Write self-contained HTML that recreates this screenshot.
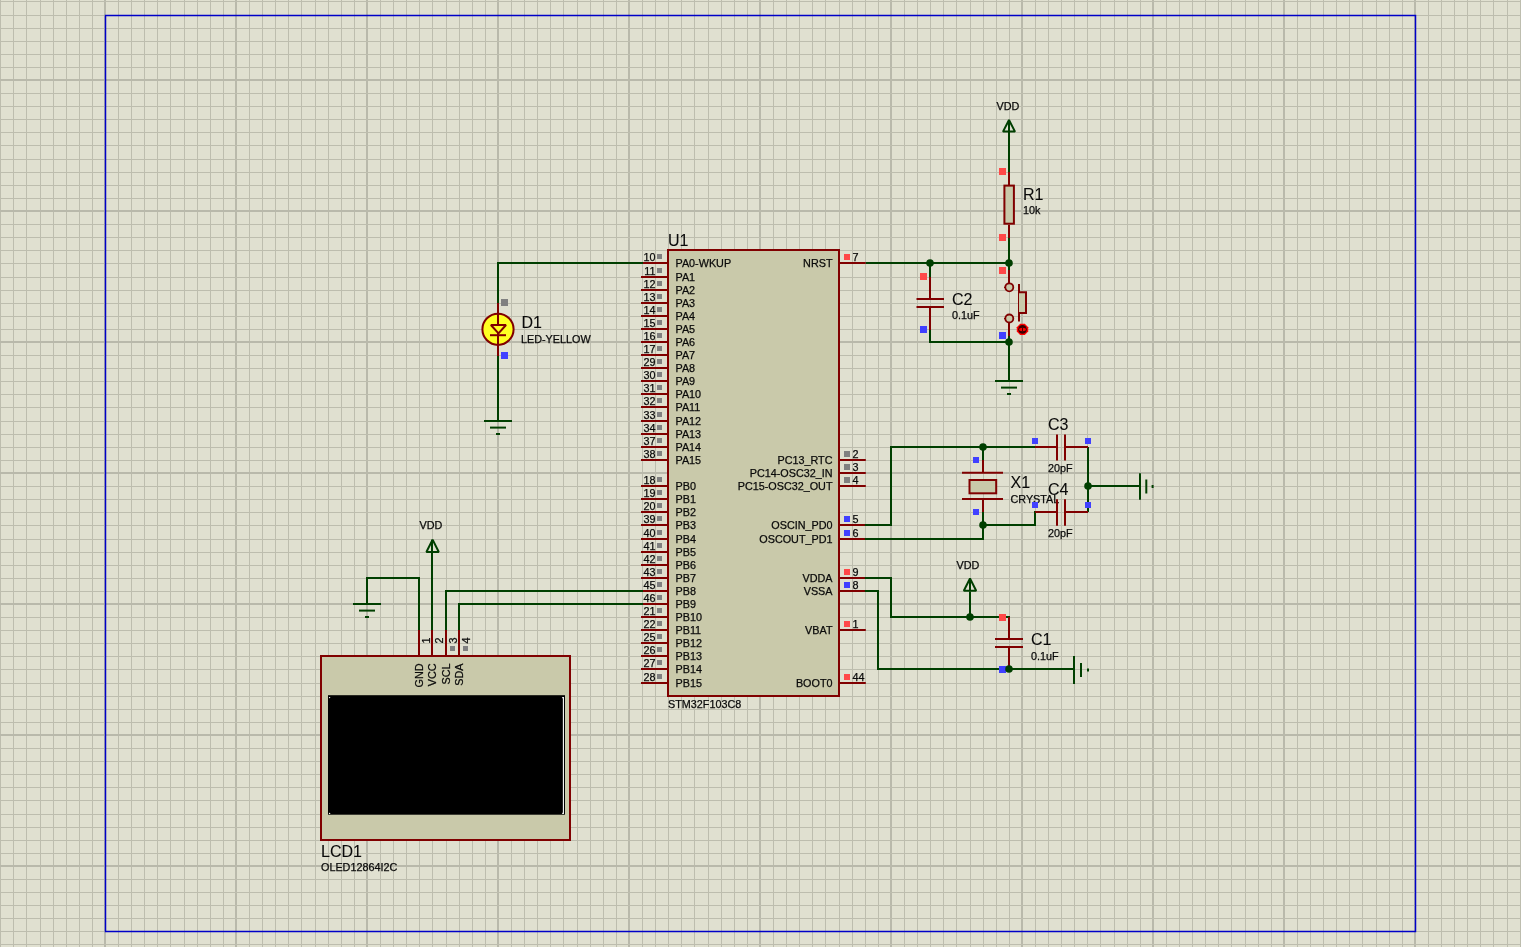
<!DOCTYPE html>
<html><head><meta charset="utf-8"><title>Proteus schematic</title>
<style>
html,body{margin:0;padding:0;background:#e0e0d0;}
body{width:1521px;height:947px;overflow:hidden;}
svg{display:block;will-change:transform;}
text{font-family:"Liberation Sans", sans-serif;fill:#0a0a0a;stroke:#0a0a0a;stroke-width:0.25px;}
text.L{stroke-width:0.08px;}
</style></head>
<body>
<svg width="1521" height="947" viewBox="0 0 1521 947">
<rect x="0" y="0" width="1521" height="947" fill="#e0e0d0"/>
<line x1="0.5" y1="0" x2="0.5" y2="947" stroke="#bdbdae" stroke-width="1"/>
<line x1="13.5" y1="0" x2="13.5" y2="947" stroke="#bdbdae" stroke-width="1"/>
<line x1="26.5" y1="0" x2="26.5" y2="947" stroke="#bdbdae" stroke-width="1"/>
<line x1="40.5" y1="0" x2="40.5" y2="947" stroke="#bdbdae" stroke-width="1"/>
<line x1="53.5" y1="0" x2="53.5" y2="947" stroke="#bdbdae" stroke-width="1"/>
<line x1="66.5" y1="0" x2="66.5" y2="947" stroke="#bdbdae" stroke-width="1"/>
<line x1="79.5" y1="0" x2="79.5" y2="947" stroke="#bdbdae" stroke-width="1"/>
<line x1="92.5" y1="0" x2="92.5" y2="947" stroke="#bdbdae" stroke-width="1"/>
<line x1="105" y1="0" x2="105" y2="947" stroke="#b9b9ab" stroke-width="2"/>
<line x1="118.5" y1="0" x2="118.5" y2="947" stroke="#bdbdae" stroke-width="1"/>
<line x1="131.5" y1="0" x2="131.5" y2="947" stroke="#bdbdae" stroke-width="1"/>
<line x1="144.5" y1="0" x2="144.5" y2="947" stroke="#bdbdae" stroke-width="1"/>
<line x1="157.5" y1="0" x2="157.5" y2="947" stroke="#bdbdae" stroke-width="1"/>
<line x1="170.5" y1="0" x2="170.5" y2="947" stroke="#bdbdae" stroke-width="1"/>
<line x1="184.5" y1="0" x2="184.5" y2="947" stroke="#bdbdae" stroke-width="1"/>
<line x1="197.5" y1="0" x2="197.5" y2="947" stroke="#bdbdae" stroke-width="1"/>
<line x1="210.5" y1="0" x2="210.5" y2="947" stroke="#bdbdae" stroke-width="1"/>
<line x1="223.5" y1="0" x2="223.5" y2="947" stroke="#bdbdae" stroke-width="1"/>
<line x1="236" y1="0" x2="236" y2="947" stroke="#b9b9ab" stroke-width="2"/>
<line x1="249.5" y1="0" x2="249.5" y2="947" stroke="#bdbdae" stroke-width="1"/>
<line x1="262.5" y1="0" x2="262.5" y2="947" stroke="#bdbdae" stroke-width="1"/>
<line x1="275.5" y1="0" x2="275.5" y2="947" stroke="#bdbdae" stroke-width="1"/>
<line x1="288.5" y1="0" x2="288.5" y2="947" stroke="#bdbdae" stroke-width="1"/>
<line x1="301.5" y1="0" x2="301.5" y2="947" stroke="#bdbdae" stroke-width="1"/>
<line x1="315.5" y1="0" x2="315.5" y2="947" stroke="#bdbdae" stroke-width="1"/>
<line x1="328.5" y1="0" x2="328.5" y2="947" stroke="#bdbdae" stroke-width="1"/>
<line x1="341.5" y1="0" x2="341.5" y2="947" stroke="#bdbdae" stroke-width="1"/>
<line x1="354.5" y1="0" x2="354.5" y2="947" stroke="#bdbdae" stroke-width="1"/>
<line x1="367" y1="0" x2="367" y2="947" stroke="#b9b9ab" stroke-width="2"/>
<line x1="380.5" y1="0" x2="380.5" y2="947" stroke="#bdbdae" stroke-width="1"/>
<line x1="393.5" y1="0" x2="393.5" y2="947" stroke="#bdbdae" stroke-width="1"/>
<line x1="406.5" y1="0" x2="406.5" y2="947" stroke="#bdbdae" stroke-width="1"/>
<line x1="419.5" y1="0" x2="419.5" y2="947" stroke="#bdbdae" stroke-width="1"/>
<line x1="432.5" y1="0" x2="432.5" y2="947" stroke="#bdbdae" stroke-width="1"/>
<line x1="446.5" y1="0" x2="446.5" y2="947" stroke="#bdbdae" stroke-width="1"/>
<line x1="459.5" y1="0" x2="459.5" y2="947" stroke="#bdbdae" stroke-width="1"/>
<line x1="472.5" y1="0" x2="472.5" y2="947" stroke="#bdbdae" stroke-width="1"/>
<line x1="485.5" y1="0" x2="485.5" y2="947" stroke="#bdbdae" stroke-width="1"/>
<line x1="498" y1="0" x2="498" y2="947" stroke="#b9b9ab" stroke-width="2"/>
<line x1="511.5" y1="0" x2="511.5" y2="947" stroke="#bdbdae" stroke-width="1"/>
<line x1="524.5" y1="0" x2="524.5" y2="947" stroke="#bdbdae" stroke-width="1"/>
<line x1="537.5" y1="0" x2="537.5" y2="947" stroke="#bdbdae" stroke-width="1"/>
<line x1="550.5" y1="0" x2="550.5" y2="947" stroke="#bdbdae" stroke-width="1"/>
<line x1="563.5" y1="0" x2="563.5" y2="947" stroke="#bdbdae" stroke-width="1"/>
<line x1="577.5" y1="0" x2="577.5" y2="947" stroke="#bdbdae" stroke-width="1"/>
<line x1="590.5" y1="0" x2="590.5" y2="947" stroke="#bdbdae" stroke-width="1"/>
<line x1="603.5" y1="0" x2="603.5" y2="947" stroke="#bdbdae" stroke-width="1"/>
<line x1="616.5" y1="0" x2="616.5" y2="947" stroke="#bdbdae" stroke-width="1"/>
<line x1="629" y1="0" x2="629" y2="947" stroke="#b9b9ab" stroke-width="2"/>
<line x1="642.5" y1="0" x2="642.5" y2="947" stroke="#bdbdae" stroke-width="1"/>
<line x1="655.5" y1="0" x2="655.5" y2="947" stroke="#bdbdae" stroke-width="1"/>
<line x1="668.5" y1="0" x2="668.5" y2="947" stroke="#bdbdae" stroke-width="1"/>
<line x1="681.5" y1="0" x2="681.5" y2="947" stroke="#bdbdae" stroke-width="1"/>
<line x1="694.5" y1="0" x2="694.5" y2="947" stroke="#bdbdae" stroke-width="1"/>
<line x1="708.5" y1="0" x2="708.5" y2="947" stroke="#bdbdae" stroke-width="1"/>
<line x1="721.5" y1="0" x2="721.5" y2="947" stroke="#bdbdae" stroke-width="1"/>
<line x1="734.5" y1="0" x2="734.5" y2="947" stroke="#bdbdae" stroke-width="1"/>
<line x1="747.5" y1="0" x2="747.5" y2="947" stroke="#bdbdae" stroke-width="1"/>
<line x1="760" y1="0" x2="760" y2="947" stroke="#b9b9ab" stroke-width="2"/>
<line x1="773.5" y1="0" x2="773.5" y2="947" stroke="#bdbdae" stroke-width="1"/>
<line x1="786.5" y1="0" x2="786.5" y2="947" stroke="#bdbdae" stroke-width="1"/>
<line x1="799.5" y1="0" x2="799.5" y2="947" stroke="#bdbdae" stroke-width="1"/>
<line x1="812.5" y1="0" x2="812.5" y2="947" stroke="#bdbdae" stroke-width="1"/>
<line x1="825.5" y1="0" x2="825.5" y2="947" stroke="#bdbdae" stroke-width="1"/>
<line x1="839.5" y1="0" x2="839.5" y2="947" stroke="#bdbdae" stroke-width="1"/>
<line x1="852.5" y1="0" x2="852.5" y2="947" stroke="#bdbdae" stroke-width="1"/>
<line x1="865.5" y1="0" x2="865.5" y2="947" stroke="#bdbdae" stroke-width="1"/>
<line x1="878.5" y1="0" x2="878.5" y2="947" stroke="#bdbdae" stroke-width="1"/>
<line x1="891" y1="0" x2="891" y2="947" stroke="#b9b9ab" stroke-width="2"/>
<line x1="904.5" y1="0" x2="904.5" y2="947" stroke="#bdbdae" stroke-width="1"/>
<line x1="917.5" y1="0" x2="917.5" y2="947" stroke="#bdbdae" stroke-width="1"/>
<line x1="930.5" y1="0" x2="930.5" y2="947" stroke="#bdbdae" stroke-width="1"/>
<line x1="943.5" y1="0" x2="943.5" y2="947" stroke="#bdbdae" stroke-width="1"/>
<line x1="956.5" y1="0" x2="956.5" y2="947" stroke="#bdbdae" stroke-width="1"/>
<line x1="970.5" y1="0" x2="970.5" y2="947" stroke="#bdbdae" stroke-width="1"/>
<line x1="983.5" y1="0" x2="983.5" y2="947" stroke="#bdbdae" stroke-width="1"/>
<line x1="996.5" y1="0" x2="996.5" y2="947" stroke="#bdbdae" stroke-width="1"/>
<line x1="1009.5" y1="0" x2="1009.5" y2="947" stroke="#bdbdae" stroke-width="1"/>
<line x1="1022" y1="0" x2="1022" y2="947" stroke="#b9b9ab" stroke-width="2"/>
<line x1="1035.5" y1="0" x2="1035.5" y2="947" stroke="#bdbdae" stroke-width="1"/>
<line x1="1048.5" y1="0" x2="1048.5" y2="947" stroke="#bdbdae" stroke-width="1"/>
<line x1="1061.5" y1="0" x2="1061.5" y2="947" stroke="#bdbdae" stroke-width="1"/>
<line x1="1074.5" y1="0" x2="1074.5" y2="947" stroke="#bdbdae" stroke-width="1"/>
<line x1="1087.5" y1="0" x2="1087.5" y2="947" stroke="#bdbdae" stroke-width="1"/>
<line x1="1100.5" y1="0" x2="1100.5" y2="947" stroke="#bdbdae" stroke-width="1"/>
<line x1="1114.5" y1="0" x2="1114.5" y2="947" stroke="#bdbdae" stroke-width="1"/>
<line x1="1127.5" y1="0" x2="1127.5" y2="947" stroke="#bdbdae" stroke-width="1"/>
<line x1="1140.5" y1="0" x2="1140.5" y2="947" stroke="#bdbdae" stroke-width="1"/>
<line x1="1153" y1="0" x2="1153" y2="947" stroke="#b9b9ab" stroke-width="2"/>
<line x1="1166.5" y1="0" x2="1166.5" y2="947" stroke="#bdbdae" stroke-width="1"/>
<line x1="1179.5" y1="0" x2="1179.5" y2="947" stroke="#bdbdae" stroke-width="1"/>
<line x1="1192.5" y1="0" x2="1192.5" y2="947" stroke="#bdbdae" stroke-width="1"/>
<line x1="1205.5" y1="0" x2="1205.5" y2="947" stroke="#bdbdae" stroke-width="1"/>
<line x1="1218.5" y1="0" x2="1218.5" y2="947" stroke="#bdbdae" stroke-width="1"/>
<line x1="1231.5" y1="0" x2="1231.5" y2="947" stroke="#bdbdae" stroke-width="1"/>
<line x1="1245.5" y1="0" x2="1245.5" y2="947" stroke="#bdbdae" stroke-width="1"/>
<line x1="1258.5" y1="0" x2="1258.5" y2="947" stroke="#bdbdae" stroke-width="1"/>
<line x1="1271.5" y1="0" x2="1271.5" y2="947" stroke="#bdbdae" stroke-width="1"/>
<line x1="1284" y1="0" x2="1284" y2="947" stroke="#b9b9ab" stroke-width="2"/>
<line x1="1297.5" y1="0" x2="1297.5" y2="947" stroke="#bdbdae" stroke-width="1"/>
<line x1="1310.5" y1="0" x2="1310.5" y2="947" stroke="#bdbdae" stroke-width="1"/>
<line x1="1323.5" y1="0" x2="1323.5" y2="947" stroke="#bdbdae" stroke-width="1"/>
<line x1="1336.5" y1="0" x2="1336.5" y2="947" stroke="#bdbdae" stroke-width="1"/>
<line x1="1349.5" y1="0" x2="1349.5" y2="947" stroke="#bdbdae" stroke-width="1"/>
<line x1="1362.5" y1="0" x2="1362.5" y2="947" stroke="#bdbdae" stroke-width="1"/>
<line x1="1376.5" y1="0" x2="1376.5" y2="947" stroke="#bdbdae" stroke-width="1"/>
<line x1="1389.5" y1="0" x2="1389.5" y2="947" stroke="#bdbdae" stroke-width="1"/>
<line x1="1402.5" y1="0" x2="1402.5" y2="947" stroke="#bdbdae" stroke-width="1"/>
<line x1="1415" y1="0" x2="1415" y2="947" stroke="#b9b9ab" stroke-width="2"/>
<line x1="1428.5" y1="0" x2="1428.5" y2="947" stroke="#bdbdae" stroke-width="1"/>
<line x1="1441.5" y1="0" x2="1441.5" y2="947" stroke="#bdbdae" stroke-width="1"/>
<line x1="1454.5" y1="0" x2="1454.5" y2="947" stroke="#bdbdae" stroke-width="1"/>
<line x1="1467.5" y1="0" x2="1467.5" y2="947" stroke="#bdbdae" stroke-width="1"/>
<line x1="1480.5" y1="0" x2="1480.5" y2="947" stroke="#bdbdae" stroke-width="1"/>
<line x1="1493.5" y1="0" x2="1493.5" y2="947" stroke="#bdbdae" stroke-width="1"/>
<line x1="1507.5" y1="0" x2="1507.5" y2="947" stroke="#bdbdae" stroke-width="1"/>
<line x1="1520.5" y1="0" x2="1520.5" y2="947" stroke="#bdbdae" stroke-width="1"/>
<line x1="0" y1="1.5" x2="1521" y2="1.5" stroke="#bdbdae" stroke-width="1"/>
<line x1="0" y1="15.5" x2="1521" y2="15.5" stroke="#bdbdae" stroke-width="1"/>
<line x1="0" y1="28.5" x2="1521" y2="28.5" stroke="#bdbdae" stroke-width="1"/>
<line x1="0" y1="41.5" x2="1521" y2="41.5" stroke="#bdbdae" stroke-width="1"/>
<line x1="0" y1="54.5" x2="1521" y2="54.5" stroke="#bdbdae" stroke-width="1"/>
<line x1="0" y1="67.5" x2="1521" y2="67.5" stroke="#bdbdae" stroke-width="1"/>
<line x1="0" y1="80" x2="1521" y2="80" stroke="#b9b9ab" stroke-width="2"/>
<line x1="0" y1="93.5" x2="1521" y2="93.5" stroke="#bdbdae" stroke-width="1"/>
<line x1="0" y1="106.5" x2="1521" y2="106.5" stroke="#bdbdae" stroke-width="1"/>
<line x1="0" y1="119.5" x2="1521" y2="119.5" stroke="#bdbdae" stroke-width="1"/>
<line x1="0" y1="132.5" x2="1521" y2="132.5" stroke="#bdbdae" stroke-width="1"/>
<line x1="0" y1="145.5" x2="1521" y2="145.5" stroke="#bdbdae" stroke-width="1"/>
<line x1="0" y1="159.5" x2="1521" y2="159.5" stroke="#bdbdae" stroke-width="1"/>
<line x1="0" y1="172.5" x2="1521" y2="172.5" stroke="#bdbdae" stroke-width="1"/>
<line x1="0" y1="185.5" x2="1521" y2="185.5" stroke="#bdbdae" stroke-width="1"/>
<line x1="0" y1="198.5" x2="1521" y2="198.5" stroke="#bdbdae" stroke-width="1"/>
<line x1="0" y1="211" x2="1521" y2="211" stroke="#b9b9ab" stroke-width="2"/>
<line x1="0" y1="224.5" x2="1521" y2="224.5" stroke="#bdbdae" stroke-width="1"/>
<line x1="0" y1="237.5" x2="1521" y2="237.5" stroke="#bdbdae" stroke-width="1"/>
<line x1="0" y1="250.5" x2="1521" y2="250.5" stroke="#bdbdae" stroke-width="1"/>
<line x1="0" y1="263.5" x2="1521" y2="263.5" stroke="#bdbdae" stroke-width="1"/>
<line x1="0" y1="277.5" x2="1521" y2="277.5" stroke="#bdbdae" stroke-width="1"/>
<line x1="0" y1="290.5" x2="1521" y2="290.5" stroke="#bdbdae" stroke-width="1"/>
<line x1="0" y1="303.5" x2="1521" y2="303.5" stroke="#bdbdae" stroke-width="1"/>
<line x1="0" y1="316.5" x2="1521" y2="316.5" stroke="#bdbdae" stroke-width="1"/>
<line x1="0" y1="329.5" x2="1521" y2="329.5" stroke="#bdbdae" stroke-width="1"/>
<line x1="0" y1="342" x2="1521" y2="342" stroke="#b9b9ab" stroke-width="2"/>
<line x1="0" y1="355.5" x2="1521" y2="355.5" stroke="#bdbdae" stroke-width="1"/>
<line x1="0" y1="368.5" x2="1521" y2="368.5" stroke="#bdbdae" stroke-width="1"/>
<line x1="0" y1="381.5" x2="1521" y2="381.5" stroke="#bdbdae" stroke-width="1"/>
<line x1="0" y1="394.5" x2="1521" y2="394.5" stroke="#bdbdae" stroke-width="1"/>
<line x1="0" y1="407.5" x2="1521" y2="407.5" stroke="#bdbdae" stroke-width="1"/>
<line x1="0" y1="421.5" x2="1521" y2="421.5" stroke="#bdbdae" stroke-width="1"/>
<line x1="0" y1="434.5" x2="1521" y2="434.5" stroke="#bdbdae" stroke-width="1"/>
<line x1="0" y1="447.5" x2="1521" y2="447.5" stroke="#bdbdae" stroke-width="1"/>
<line x1="0" y1="460.5" x2="1521" y2="460.5" stroke="#bdbdae" stroke-width="1"/>
<line x1="0" y1="473" x2="1521" y2="473" stroke="#b9b9ab" stroke-width="2"/>
<line x1="0" y1="486.5" x2="1521" y2="486.5" stroke="#bdbdae" stroke-width="1"/>
<line x1="0" y1="499.5" x2="1521" y2="499.5" stroke="#bdbdae" stroke-width="1"/>
<line x1="0" y1="512.5" x2="1521" y2="512.5" stroke="#bdbdae" stroke-width="1"/>
<line x1="0" y1="525.5" x2="1521" y2="525.5" stroke="#bdbdae" stroke-width="1"/>
<line x1="0" y1="539.5" x2="1521" y2="539.5" stroke="#bdbdae" stroke-width="1"/>
<line x1="0" y1="552.5" x2="1521" y2="552.5" stroke="#bdbdae" stroke-width="1"/>
<line x1="0" y1="565.5" x2="1521" y2="565.5" stroke="#bdbdae" stroke-width="1"/>
<line x1="0" y1="578.5" x2="1521" y2="578.5" stroke="#bdbdae" stroke-width="1"/>
<line x1="0" y1="591.5" x2="1521" y2="591.5" stroke="#bdbdae" stroke-width="1"/>
<line x1="0" y1="604" x2="1521" y2="604" stroke="#b9b9ab" stroke-width="2"/>
<line x1="0" y1="617.5" x2="1521" y2="617.5" stroke="#bdbdae" stroke-width="1"/>
<line x1="0" y1="630.5" x2="1521" y2="630.5" stroke="#bdbdae" stroke-width="1"/>
<line x1="0" y1="643.5" x2="1521" y2="643.5" stroke="#bdbdae" stroke-width="1"/>
<line x1="0" y1="656.5" x2="1521" y2="656.5" stroke="#bdbdae" stroke-width="1"/>
<line x1="0" y1="669.5" x2="1521" y2="669.5" stroke="#bdbdae" stroke-width="1"/>
<line x1="0" y1="683.5" x2="1521" y2="683.5" stroke="#bdbdae" stroke-width="1"/>
<line x1="0" y1="696.5" x2="1521" y2="696.5" stroke="#bdbdae" stroke-width="1"/>
<line x1="0" y1="709.5" x2="1521" y2="709.5" stroke="#bdbdae" stroke-width="1"/>
<line x1="0" y1="722.5" x2="1521" y2="722.5" stroke="#bdbdae" stroke-width="1"/>
<line x1="0" y1="735" x2="1521" y2="735" stroke="#b9b9ab" stroke-width="2"/>
<line x1="0" y1="748.5" x2="1521" y2="748.5" stroke="#bdbdae" stroke-width="1"/>
<line x1="0" y1="761.5" x2="1521" y2="761.5" stroke="#bdbdae" stroke-width="1"/>
<line x1="0" y1="774.5" x2="1521" y2="774.5" stroke="#bdbdae" stroke-width="1"/>
<line x1="0" y1="787.5" x2="1521" y2="787.5" stroke="#bdbdae" stroke-width="1"/>
<line x1="0" y1="800.5" x2="1521" y2="800.5" stroke="#bdbdae" stroke-width="1"/>
<line x1="0" y1="814.5" x2="1521" y2="814.5" stroke="#bdbdae" stroke-width="1"/>
<line x1="0" y1="827.5" x2="1521" y2="827.5" stroke="#bdbdae" stroke-width="1"/>
<line x1="0" y1="840.5" x2="1521" y2="840.5" stroke="#bdbdae" stroke-width="1"/>
<line x1="0" y1="853.5" x2="1521" y2="853.5" stroke="#bdbdae" stroke-width="1"/>
<line x1="0" y1="866" x2="1521" y2="866" stroke="#b9b9ab" stroke-width="2"/>
<line x1="0" y1="879.5" x2="1521" y2="879.5" stroke="#bdbdae" stroke-width="1"/>
<line x1="0" y1="892.5" x2="1521" y2="892.5" stroke="#bdbdae" stroke-width="1"/>
<line x1="0" y1="905.5" x2="1521" y2="905.5" stroke="#bdbdae" stroke-width="1"/>
<line x1="0" y1="918.5" x2="1521" y2="918.5" stroke="#bdbdae" stroke-width="1"/>
<line x1="0" y1="931.5" x2="1521" y2="931.5" stroke="#bdbdae" stroke-width="1"/>
<line x1="0" y1="944.5" x2="1521" y2="944.5" stroke="#bdbdae" stroke-width="1"/>
<rect x="105.5" y="15.5" width="1310" height="916" fill="none" stroke="#0000c8" stroke-width="1.5"/>
<rect x="668" y="250" width="171" height="446" fill="#c9c9aa" stroke="#800000" stroke-width="2"/>
<line x1="641" y1="263" x2="668" y2="263" stroke="#800000" stroke-width="2"/>
<text x="655.5" y="260.8" font-size="10.8" text-anchor="end">10</text>
<text x="675.5" y="266.7" font-size="10.8" text-anchor="start">PA0-WKUP</text>
<line x1="641" y1="277" x2="668" y2="277" stroke="#800000" stroke-width="2"/>
<text x="655.5" y="274.8" font-size="10.8" text-anchor="end">11</text>
<text x="675.5" y="280.7" font-size="10.8" text-anchor="start">PA1</text>
<line x1="641" y1="290" x2="668" y2="290" stroke="#800000" stroke-width="2"/>
<text x="655.5" y="287.8" font-size="10.8" text-anchor="end">12</text>
<text x="675.5" y="293.7" font-size="10.8" text-anchor="start">PA2</text>
<line x1="641" y1="303" x2="668" y2="303" stroke="#800000" stroke-width="2"/>
<text x="655.5" y="300.8" font-size="10.8" text-anchor="end">13</text>
<text x="675.5" y="306.7" font-size="10.8" text-anchor="start">PA3</text>
<line x1="641" y1="316" x2="668" y2="316" stroke="#800000" stroke-width="2"/>
<text x="655.5" y="313.8" font-size="10.8" text-anchor="end">14</text>
<text x="675.5" y="319.7" font-size="10.8" text-anchor="start">PA4</text>
<line x1="641" y1="329" x2="668" y2="329" stroke="#800000" stroke-width="2"/>
<text x="655.5" y="326.8" font-size="10.8" text-anchor="end">15</text>
<text x="675.5" y="332.7" font-size="10.8" text-anchor="start">PA5</text>
<line x1="641" y1="342" x2="668" y2="342" stroke="#800000" stroke-width="2"/>
<text x="655.5" y="339.8" font-size="10.8" text-anchor="end">16</text>
<text x="675.5" y="345.7" font-size="10.8" text-anchor="start">PA6</text>
<line x1="641" y1="355" x2="668" y2="355" stroke="#800000" stroke-width="2"/>
<text x="655.5" y="352.8" font-size="10.8" text-anchor="end">17</text>
<text x="675.5" y="358.7" font-size="10.8" text-anchor="start">PA7</text>
<line x1="641" y1="368" x2="668" y2="368" stroke="#800000" stroke-width="2"/>
<text x="655.5" y="365.8" font-size="10.8" text-anchor="end">29</text>
<text x="675.5" y="371.7" font-size="10.8" text-anchor="start">PA8</text>
<line x1="641" y1="381" x2="668" y2="381" stroke="#800000" stroke-width="2"/>
<text x="655.5" y="378.8" font-size="10.8" text-anchor="end">30</text>
<text x="675.5" y="384.7" font-size="10.8" text-anchor="start">PA9</text>
<line x1="641" y1="394" x2="668" y2="394" stroke="#800000" stroke-width="2"/>
<text x="655.5" y="391.8" font-size="10.8" text-anchor="end">31</text>
<text x="675.5" y="397.7" font-size="10.8" text-anchor="start">PA10</text>
<line x1="641" y1="407" x2="668" y2="407" stroke="#800000" stroke-width="2"/>
<text x="655.5" y="404.8" font-size="10.8" text-anchor="end">32</text>
<text x="675.5" y="410.7" font-size="10.8" text-anchor="start">PA11</text>
<line x1="641" y1="421" x2="668" y2="421" stroke="#800000" stroke-width="2"/>
<text x="655.5" y="418.8" font-size="10.8" text-anchor="end">33</text>
<text x="675.5" y="424.7" font-size="10.8" text-anchor="start">PA12</text>
<line x1="641" y1="434" x2="668" y2="434" stroke="#800000" stroke-width="2"/>
<text x="655.5" y="431.8" font-size="10.8" text-anchor="end">34</text>
<text x="675.5" y="437.7" font-size="10.8" text-anchor="start">PA13</text>
<line x1="641" y1="447" x2="668" y2="447" stroke="#800000" stroke-width="2"/>
<text x="655.5" y="444.8" font-size="10.8" text-anchor="end">37</text>
<text x="675.5" y="450.7" font-size="10.8" text-anchor="start">PA14</text>
<line x1="641" y1="460" x2="668" y2="460" stroke="#800000" stroke-width="2"/>
<text x="655.5" y="457.8" font-size="10.8" text-anchor="end">38</text>
<text x="675.5" y="463.7" font-size="10.8" text-anchor="start">PA15</text>
<line x1="641" y1="486" x2="668" y2="486" stroke="#800000" stroke-width="2"/>
<text x="655.5" y="483.8" font-size="10.8" text-anchor="end">18</text>
<text x="675.5" y="489.7" font-size="10.8" text-anchor="start">PB0</text>
<line x1="641" y1="499" x2="668" y2="499" stroke="#800000" stroke-width="2"/>
<text x="655.5" y="496.8" font-size="10.8" text-anchor="end">19</text>
<text x="675.5" y="502.7" font-size="10.8" text-anchor="start">PB1</text>
<line x1="641" y1="512" x2="668" y2="512" stroke="#800000" stroke-width="2"/>
<text x="655.5" y="509.8" font-size="10.8" text-anchor="end">20</text>
<text x="675.5" y="515.7" font-size="10.8" text-anchor="start">PB2</text>
<line x1="641" y1="525" x2="668" y2="525" stroke="#800000" stroke-width="2"/>
<text x="655.5" y="522.8" font-size="10.8" text-anchor="end">39</text>
<text x="675.5" y="528.7" font-size="10.8" text-anchor="start">PB3</text>
<line x1="641" y1="539" x2="668" y2="539" stroke="#800000" stroke-width="2"/>
<text x="655.5" y="536.8" font-size="10.8" text-anchor="end">40</text>
<text x="675.5" y="542.7" font-size="10.8" text-anchor="start">PB4</text>
<line x1="641" y1="552" x2="668" y2="552" stroke="#800000" stroke-width="2"/>
<text x="655.5" y="549.8" font-size="10.8" text-anchor="end">41</text>
<text x="675.5" y="555.7" font-size="10.8" text-anchor="start">PB5</text>
<line x1="641" y1="565" x2="668" y2="565" stroke="#800000" stroke-width="2"/>
<text x="655.5" y="562.8" font-size="10.8" text-anchor="end">42</text>
<text x="675.5" y="568.7" font-size="10.8" text-anchor="start">PB6</text>
<line x1="641" y1="578" x2="668" y2="578" stroke="#800000" stroke-width="2"/>
<text x="655.5" y="575.8" font-size="10.8" text-anchor="end">43</text>
<text x="675.5" y="581.7" font-size="10.8" text-anchor="start">PB7</text>
<line x1="641" y1="591" x2="668" y2="591" stroke="#800000" stroke-width="2"/>
<text x="655.5" y="588.8" font-size="10.8" text-anchor="end">45</text>
<text x="675.5" y="594.7" font-size="10.8" text-anchor="start">PB8</text>
<line x1="641" y1="604" x2="668" y2="604" stroke="#800000" stroke-width="2"/>
<text x="655.5" y="601.8" font-size="10.8" text-anchor="end">46</text>
<text x="675.5" y="607.7" font-size="10.8" text-anchor="start">PB9</text>
<line x1="641" y1="617" x2="668" y2="617" stroke="#800000" stroke-width="2"/>
<text x="655.5" y="614.8" font-size="10.8" text-anchor="end">21</text>
<text x="675.5" y="620.7" font-size="10.8" text-anchor="start">PB10</text>
<line x1="641" y1="630" x2="668" y2="630" stroke="#800000" stroke-width="2"/>
<text x="655.5" y="627.8" font-size="10.8" text-anchor="end">22</text>
<text x="675.5" y="633.7" font-size="10.8" text-anchor="start">PB11</text>
<line x1="641" y1="643" x2="668" y2="643" stroke="#800000" stroke-width="2"/>
<text x="655.5" y="640.8" font-size="10.8" text-anchor="end">25</text>
<text x="675.5" y="646.7" font-size="10.8" text-anchor="start">PB12</text>
<line x1="641" y1="656" x2="668" y2="656" stroke="#800000" stroke-width="2"/>
<text x="655.5" y="653.8" font-size="10.8" text-anchor="end">26</text>
<text x="675.5" y="659.7" font-size="10.8" text-anchor="start">PB13</text>
<line x1="641" y1="669" x2="668" y2="669" stroke="#800000" stroke-width="2"/>
<text x="655.5" y="666.8" font-size="10.8" text-anchor="end">27</text>
<text x="675.5" y="672.7" font-size="10.8" text-anchor="start">PB14</text>
<line x1="641" y1="683" x2="668" y2="683" stroke="#800000" stroke-width="2"/>
<text x="655.5" y="680.8" font-size="10.8" text-anchor="end">28</text>
<text x="675.5" y="686.7" font-size="10.8" text-anchor="start">PB15</text>
<line x1="839" y1="263" x2="865.8" y2="263" stroke="#800000" stroke-width="2"/>
<text x="852.5" y="260.8" font-size="10.8" text-anchor="start">7</text>
<text x="832.5" y="266.7" font-size="10.8" text-anchor="end">NRST</text>
<line x1="839" y1="460" x2="865.8" y2="460" stroke="#800000" stroke-width="2"/>
<text x="852.5" y="457.8" font-size="10.8" text-anchor="start">2</text>
<text x="832.5" y="463.7" font-size="10.8" text-anchor="end">PC13_RTC</text>
<line x1="839" y1="473" x2="865.8" y2="473" stroke="#800000" stroke-width="2"/>
<text x="852.5" y="470.8" font-size="10.8" text-anchor="start">3</text>
<text x="832.5" y="476.7" font-size="10.8" text-anchor="end">PC14-OSC32_IN</text>
<line x1="839" y1="486" x2="865.8" y2="486" stroke="#800000" stroke-width="2"/>
<text x="852.5" y="483.8" font-size="10.8" text-anchor="start">4</text>
<text x="832.5" y="489.7" font-size="10.8" text-anchor="end">PC15-OSC32_OUT</text>
<line x1="839" y1="525" x2="865.8" y2="525" stroke="#800000" stroke-width="2"/>
<text x="852.5" y="522.8" font-size="10.8" text-anchor="start">5</text>
<text x="832.5" y="528.7" font-size="10.8" text-anchor="end">OSCIN_PD0</text>
<line x1="839" y1="539" x2="865.8" y2="539" stroke="#800000" stroke-width="2"/>
<text x="852.5" y="536.8" font-size="10.8" text-anchor="start">6</text>
<text x="832.5" y="542.7" font-size="10.8" text-anchor="end">OSCOUT_PD1</text>
<line x1="839" y1="578" x2="865.8" y2="578" stroke="#800000" stroke-width="2"/>
<text x="852.5" y="575.8" font-size="10.8" text-anchor="start">9</text>
<text x="832.5" y="581.7" font-size="10.8" text-anchor="end">VDDA</text>
<line x1="839" y1="591" x2="865.8" y2="591" stroke="#800000" stroke-width="2"/>
<text x="852.5" y="588.8" font-size="10.8" text-anchor="start">8</text>
<text x="832.5" y="594.7" font-size="10.8" text-anchor="end">VSSA</text>
<line x1="839" y1="630" x2="865.8" y2="630" stroke="#800000" stroke-width="2"/>
<text x="852.5" y="627.8" font-size="10.8" text-anchor="start">1</text>
<text x="832.5" y="633.7" font-size="10.8" text-anchor="end">VBAT</text>
<line x1="839" y1="683" x2="865.8" y2="683" stroke="#800000" stroke-width="2"/>
<text x="852.5" y="680.8" font-size="10.8" text-anchor="start">44</text>
<text x="832.5" y="686.7" font-size="10.8" text-anchor="end">BOOT0</text>
<text x="668" y="246" font-size="16.0" text-anchor="start" class="L">U1</text>
<text x="668" y="708" font-size="10.8" text-anchor="start">STM32F103C8</text>
<polyline points="642,263 498,263 498,303" stroke="#003f00" stroke-width="2" fill="none" stroke-linejoin="miter" stroke-linecap="square"/>
<line x1="498" y1="356" x2="498" y2="421" stroke="#003f00" stroke-width="2"/>
<line x1="865.8" y1="263" x2="1009" y2="263" stroke="#003f00" stroke-width="2"/>
<line x1="1009" y1="132" x2="1009" y2="172" stroke="#003f00" stroke-width="2"/>
<line x1="1009" y1="238" x2="1009" y2="270" stroke="#003f00" stroke-width="2"/>
<line x1="930" y1="263" x2="930" y2="277" stroke="#003f00" stroke-width="2"/>
<polyline points="930,330 930,342 1009,342" stroke="#003f00" stroke-width="2" fill="none" stroke-linejoin="miter" stroke-linecap="square"/>
<line x1="1009" y1="336" x2="1009" y2="381" stroke="#003f00" stroke-width="2"/>
<polyline points="865.8,525 891,525 891,447 1035,447" stroke="#003f00" stroke-width="2" fill="none" stroke-linejoin="miter" stroke-linecap="square"/>
<line x1="983" y1="447" x2="983" y2="460" stroke="#003f00" stroke-width="2"/>
<polyline points="983,512 983,539 865.8,539" stroke="#003f00" stroke-width="2" fill="none" stroke-linejoin="miter" stroke-linecap="square"/>
<polyline points="983,525 1035,525 1035,512" stroke="#003f00" stroke-width="2" fill="none" stroke-linejoin="miter" stroke-linecap="square"/>
<line x1="1088" y1="447" x2="1088" y2="512" stroke="#003f00" stroke-width="2"/>
<line x1="1088" y1="486" x2="1140" y2="486" stroke="#003f00" stroke-width="2"/>
<polyline points="865.8,578 891,578 891,617 1009,617" stroke="#003f00" stroke-width="2" fill="none" stroke-linejoin="miter" stroke-linecap="square"/>
<line x1="970" y1="591.5" x2="970" y2="617" stroke="#003f00" stroke-width="2"/>
<polyline points="865.8,591 878,591 878,669 1074,669" stroke="#003f00" stroke-width="2" fill="none" stroke-linejoin="miter" stroke-linecap="square"/>
<polyline points="419,630 419,578 367,578 367,604" stroke="#003f00" stroke-width="2" fill="none" stroke-linejoin="miter" stroke-linecap="square"/>
<line x1="432" y1="630" x2="432" y2="552" stroke="#003f00" stroke-width="2"/>
<polyline points="446,630 446,591 642,591" stroke="#003f00" stroke-width="2" fill="none" stroke-linejoin="miter" stroke-linecap="square"/>
<polyline points="459,630 459,604 642,604" stroke="#003f00" stroke-width="2" fill="none" stroke-linejoin="miter" stroke-linecap="square"/>
<line x1="498" y1="303" x2="498" y2="356" stroke="#800000" stroke-width="2"/>
<circle cx="498" cy="329.3" r="15.6" fill="#ffff22" stroke="#800000" stroke-width="2"/>
<line x1="498" y1="313" x2="498" y2="346" stroke="#800000" stroke-width="2"/>
<polygon points="490.9,325 506,325 498.5,333.4" fill="#ffff22" stroke="#800000" stroke-width="2" stroke-linejoin="bevel"/>
<line x1="490" y1="335.2" x2="506" y2="335.2" stroke="#800000" stroke-width="2"/>
<text x="521.5" y="328" font-size="16.0" text-anchor="start" class="L">D1</text>
<text x="521" y="342.6" font-size="10.8" text-anchor="start">LED-YELLOW</text>
<line x1="484" y1="421" x2="512" y2="421" stroke="#003f00" stroke-width="2"/>
<line x1="490" y1="427.6" x2="506" y2="427.6" stroke="#003f00" stroke-width="2"/>
<line x1="496" y1="434" x2="500" y2="434" stroke="#003f00" stroke-width="2"/>
<polygon points="1009,120 1003,131.6 1015,131.6" fill="none" stroke="#003f00" stroke-width="2" stroke-linejoin="bevel"/>
<line x1="1009" y1="120.2" x2="1009" y2="131.6" stroke="#003f00" stroke-width="2"/>
<text x="1008" y="110" font-size="10.8" text-anchor="middle">VDD</text>
<line x1="1009" y1="172" x2="1009" y2="185" stroke="#800000" stroke-width="2"/>
<rect x="1004.4" y="185.6" width="9.5" height="38.1" fill="#c9c9aa" stroke="#800000" stroke-width="2"/>
<line x1="1009" y1="224.7" x2="1009" y2="238" stroke="#800000" stroke-width="2"/>
<text x="1023" y="199.8" font-size="16.0" text-anchor="start" class="L">R1</text>
<text x="1023" y="214.2" font-size="10.8" text-anchor="start">10k</text>
<line x1="930" y1="277" x2="930" y2="299" stroke="#800000" stroke-width="2"/>
<line x1="916.5" y1="299" x2="944" y2="299" stroke="#800000" stroke-width="2"/>
<line x1="916.5" y1="307" x2="944" y2="307" stroke="#800000" stroke-width="2"/>
<line x1="930" y1="307" x2="930" y2="330" stroke="#800000" stroke-width="2"/>
<text x="952" y="304.7" font-size="16.0" text-anchor="start" class="L">C2</text>
<text x="952" y="318.9" font-size="10.8" text-anchor="start">0.1uF</text>
<line x1="1009" y1="270" x2="1009" y2="283" stroke="#800000" stroke-width="2"/>
<circle cx="1009.3" cy="287.3" r="4" fill="#c9c9aa" stroke="#800000" stroke-width="1.8"/>
<circle cx="1009.3" cy="318.5" r="4" fill="#c9c9aa" stroke="#800000" stroke-width="1.8"/>
<line x1="1009" y1="322.8" x2="1009" y2="336" stroke="#800000" stroke-width="2"/>
<line x1="1004" y1="287.4" x2="1005.6" y2="287.4" stroke="#800000" stroke-width="1.1"/>
<line x1="1004" y1="318.6" x2="1005.6" y2="318.6" stroke="#800000" stroke-width="1.1"/>
<line x1="1019" y1="284" x2="1019" y2="321.5" stroke="#800000" stroke-width="2"/>
<polyline points="1019,292.2 1026,292.2 1026,313 1019,313" fill="#c9c9aa" stroke="#800000" stroke-width="2"/>
<polygon points="1020.2,323.8 1024.8,323.8 1028.2,327.2 1028.2,331.6 1024.8,335 1020.2,335 1016.8,331.6 1016.8,327.2" fill="#ff0000"/>
<circle cx="1022.5" cy="329.4" r="4.3" fill="#3a0000"/>
<ellipse cx="1022.5" cy="329.5" rx="3.4" ry="1.7" fill="#ff0000"/>
<line x1="1022.5" y1="327.6" x2="1022.5" y2="331.4" stroke="#3a0000" stroke-width="0.9"/>
<line x1="995" y1="381" x2="1023" y2="381" stroke="#003f00" stroke-width="2"/>
<line x1="1001" y1="387.6" x2="1017" y2="387.6" stroke="#003f00" stroke-width="2"/>
<line x1="1007" y1="394" x2="1011" y2="394" stroke="#003f00" stroke-width="2"/>
<line x1="983" y1="460" x2="983" y2="473" stroke="#800000" stroke-width="2"/>
<line x1="962" y1="472.8" x2="1003" y2="472.8" stroke="#800000" stroke-width="2"/>
<rect x="969.5" y="480" width="26.7" height="13.3" fill="#c9c9aa" stroke="#800000" stroke-width="2"/>
<line x1="962" y1="499" x2="1003" y2="499" stroke="#800000" stroke-width="2"/>
<line x1="983" y1="499" x2="983" y2="512" stroke="#800000" stroke-width="2"/>
<text x="1010.5" y="487.5" font-size="16.0" text-anchor="start" class="L">X1</text>
<text x="1010.5" y="502.8" font-size="10.8" text-anchor="start">CRYSTAL</text>
<line x1="1035" y1="447" x2="1057" y2="447" stroke="#800000" stroke-width="2"/>
<line x1="1057" y1="434.6" x2="1057" y2="460.4" stroke="#800000" stroke-width="2"/>
<line x1="1065" y1="434.6" x2="1065" y2="460.4" stroke="#800000" stroke-width="2"/>
<line x1="1065" y1="447" x2="1088" y2="447" stroke="#800000" stroke-width="2"/>
<text x="1048" y="429.5" font-size="16.0" text-anchor="start" class="L">C3</text>
<text x="1048" y="472" font-size="10.8" text-anchor="start">20pF</text>
<line x1="1035" y1="512" x2="1057" y2="512" stroke="#800000" stroke-width="2"/>
<line x1="1057" y1="499.2" x2="1057" y2="525.7" stroke="#800000" stroke-width="2"/>
<line x1="1065" y1="499.2" x2="1065" y2="525.7" stroke="#800000" stroke-width="2"/>
<line x1="1065" y1="512" x2="1088" y2="512" stroke="#800000" stroke-width="2"/>
<text x="1048" y="494.7" font-size="16.0" text-anchor="start" class="L">C4</text>
<text x="1048" y="537" font-size="10.8" text-anchor="start">20pF</text>
<line x1="1140" y1="473.2" x2="1140" y2="499.8" stroke="#003f00" stroke-width="2"/>
<line x1="1146.3" y1="479.5" x2="1146.3" y2="493.5" stroke="#003f00" stroke-width="2"/>
<line x1="1152.6" y1="485" x2="1152.6" y2="488" stroke="#003f00" stroke-width="2"/>
<polygon points="970,578.5 963.8,590.8 976.2,590.8" fill="none" stroke="#003f00" stroke-width="2" stroke-linejoin="bevel"/>
<line x1="970" y1="578.7" x2="970" y2="590.8" stroke="#003f00" stroke-width="2"/>
<text x="968" y="569" font-size="10.8" text-anchor="middle">VDD</text>
<line x1="1009" y1="617" x2="1009" y2="639" stroke="#800000" stroke-width="2"/>
<line x1="995" y1="639" x2="1023" y2="639" stroke="#800000" stroke-width="2"/>
<line x1="995" y1="647" x2="1023" y2="647" stroke="#800000" stroke-width="2"/>
<line x1="1009" y1="647" x2="1009" y2="669" stroke="#800000" stroke-width="2"/>
<text x="1031" y="644.6" font-size="16.0" text-anchor="start" class="L">C1</text>
<text x="1031" y="659.8" font-size="10.8" text-anchor="start">0.1uF</text>
<line x1="1074" y1="656" x2="1074" y2="684" stroke="#003f00" stroke-width="2"/>
<line x1="1081" y1="663" x2="1081" y2="677" stroke="#003f00" stroke-width="2"/>
<line x1="1088" y1="668.5" x2="1088" y2="671.5" stroke="#003f00" stroke-width="2"/>
<rect x="321" y="656" width="249" height="184" fill="#c9c9aa" stroke="#800000" stroke-width="2"/>
<rect x="328" y="695.2" width="237" height="119.5" fill="#000000"/>
<circle cx="329.6" cy="697.6" r="0.7" fill="#fff"/>
<circle cx="329.6" cy="813.4" r="0.7" fill="#fff"/>
<path d="M562.2,697.6 H563.4 V813.4 H562.2" fill="none" stroke="#fff" stroke-width="1.1"/>
<line x1="419" y1="630" x2="419" y2="656" stroke="#800000" stroke-width="2"/>
<line x1="432" y1="630" x2="432" y2="656" stroke="#800000" stroke-width="2"/>
<line x1="446" y1="630" x2="446" y2="656" stroke="#800000" stroke-width="2"/>
<line x1="459" y1="630" x2="459" y2="656" stroke="#800000" stroke-width="2"/>
<text x="0" y="0" font-size="10.8" transform="translate(429.5,643.5) rotate(-90)">1</text>
<text x="0" y="0" font-size="10.8" transform="translate(442.5,643.5) rotate(-90)">2</text>
<text x="0" y="0" font-size="10.8" transform="translate(456.5,643.5) rotate(-90)">3</text>
<text x="0" y="0" font-size="10.8" transform="translate(469.5,643.5) rotate(-90)">4</text>
<text x="0" y="0" font-size="10.8" text-anchor="end" transform="translate(423.2,663.5) rotate(-90)">GND</text>
<text x="0" y="0" font-size="10.8" text-anchor="end" transform="translate(436.2,663.5) rotate(-90)">VCC</text>
<text x="0" y="0" font-size="10.8" text-anchor="end" transform="translate(450.2,663.5) rotate(-90)">SCL</text>
<text x="0" y="0" font-size="10.8" text-anchor="end" transform="translate(463.2,663.5) rotate(-90)">SDA</text>
<polygon points="432.6,539.6 426.4,552 438.8,552" fill="none" stroke="#003f00" stroke-width="2" stroke-linejoin="bevel"/>
<line x1="432" y1="539.8" x2="432" y2="552" stroke="#003f00" stroke-width="2"/>
<text x="431" y="529" font-size="10.8" text-anchor="middle">VDD</text>
<line x1="353" y1="604" x2="381" y2="604" stroke="#003f00" stroke-width="2"/>
<line x1="359" y1="610.6" x2="375" y2="610.6" stroke="#003f00" stroke-width="2"/>
<line x1="365" y1="617" x2="369" y2="617" stroke="#003f00" stroke-width="2"/>
<text x="321" y="857" font-size="16.0" text-anchor="start" class="L">LCD1</text>
<text x="321" y="870.7" font-size="10.8" text-anchor="start">OLED12864I2C</text>
<rect x="657" y="254" width="5" height="5" fill="#808080"/>
<rect x="657" y="268" width="5" height="5" fill="#808080"/>
<rect x="657" y="281" width="5" height="5" fill="#808080"/>
<rect x="657" y="294" width="5" height="5" fill="#808080"/>
<rect x="657" y="307" width="5" height="5" fill="#808080"/>
<rect x="657" y="320" width="5" height="5" fill="#808080"/>
<rect x="657" y="333" width="5" height="5" fill="#808080"/>
<rect x="657" y="346" width="5" height="5" fill="#808080"/>
<rect x="657" y="359" width="5" height="5" fill="#808080"/>
<rect x="657" y="372" width="5" height="5" fill="#808080"/>
<rect x="657" y="385" width="5" height="5" fill="#808080"/>
<rect x="657" y="398" width="5" height="5" fill="#808080"/>
<rect x="657" y="412" width="5" height="5" fill="#808080"/>
<rect x="657" y="425" width="5" height="5" fill="#808080"/>
<rect x="657" y="438" width="5" height="5" fill="#808080"/>
<rect x="657" y="451" width="5" height="5" fill="#808080"/>
<rect x="657" y="477" width="5" height="5" fill="#808080"/>
<rect x="657" y="490" width="5" height="5" fill="#808080"/>
<rect x="657" y="503" width="5" height="5" fill="#808080"/>
<rect x="657" y="516" width="5" height="5" fill="#808080"/>
<rect x="657" y="530" width="5" height="5" fill="#808080"/>
<rect x="657" y="543" width="5" height="5" fill="#808080"/>
<rect x="657" y="556" width="5" height="5" fill="#808080"/>
<rect x="657" y="569" width="5" height="5" fill="#808080"/>
<rect x="657" y="582" width="5" height="5" fill="#808080"/>
<rect x="657" y="595" width="5" height="5" fill="#808080"/>
<rect x="657" y="608" width="5" height="5" fill="#808080"/>
<rect x="657" y="621" width="5" height="5" fill="#808080"/>
<rect x="657" y="634" width="5" height="5" fill="#808080"/>
<rect x="657" y="647" width="5" height="5" fill="#808080"/>
<rect x="657" y="660" width="5" height="5" fill="#808080"/>
<rect x="657" y="674" width="5" height="5" fill="#808080"/>
<rect x="844" y="254" width="6" height="6" fill="#ff4848"/>
<rect x="844" y="451" width="6" height="6" fill="#808080"/>
<rect x="844" y="464" width="6" height="6" fill="#808080"/>
<rect x="844" y="477" width="6" height="6" fill="#808080"/>
<rect x="844" y="516" width="6" height="6" fill="#4040ff"/>
<rect x="844" y="530" width="6" height="6" fill="#4040ff"/>
<rect x="844" y="569" width="6" height="6" fill="#ff4848"/>
<rect x="844" y="582" width="6" height="6" fill="#4040ff"/>
<rect x="844" y="621" width="6" height="6" fill="#ff4848"/>
<rect x="844" y="674" width="6" height="6" fill="#ff4848"/>
<rect x="501" y="299" width="7" height="7" fill="#808080"/>
<rect x="501" y="352" width="7" height="7" fill="#4040ff"/>
<rect x="999" y="168" width="7" height="7" fill="#ff4848"/>
<rect x="999" y="234" width="7" height="7" fill="#ff4848"/>
<rect x="920" y="273" width="7" height="7" fill="#ff4848"/>
<rect x="920" y="326" width="7" height="7" fill="#4040ff"/>
<rect x="999" y="267" width="7" height="7" fill="#ff4848"/>
<rect x="999" y="332" width="7" height="7" fill="#4040ff"/>
<rect x="973" y="457" width="6" height="6" fill="#4040ff"/>
<rect x="973" y="509" width="6" height="6" fill="#4040ff"/>
<rect x="1032" y="438" width="6" height="6" fill="#4040ff"/>
<rect x="1085" y="438" width="6" height="6" fill="#4040ff"/>
<rect x="1032" y="502" width="6" height="6" fill="#4040ff"/>
<rect x="1085" y="502" width="6" height="6" fill="#4040ff"/>
<rect x="999" y="614" width="7" height="7" fill="#ff4848"/>
<rect x="999" y="666" width="7" height="7" fill="#4040ff"/>
<rect x="450" y="646" width="5" height="5" fill="#808080"/>
<rect x="463" y="646" width="5" height="5" fill="#808080"/>
<circle cx="930" cy="263" r="3.8" fill="#003f00"/>
<circle cx="1009" cy="263" r="3.8" fill="#003f00"/>
<circle cx="1009" cy="342" r="3.8" fill="#003f00"/>
<circle cx="983" cy="447" r="3.8" fill="#003f00"/>
<circle cx="983" cy="525" r="3.8" fill="#003f00"/>
<circle cx="1088" cy="486" r="3.8" fill="#003f00"/>
<circle cx="970" cy="617" r="3.8" fill="#003f00"/>
<circle cx="1009" cy="669" r="3.8" fill="#003f00"/>
</svg>
</body></html>
